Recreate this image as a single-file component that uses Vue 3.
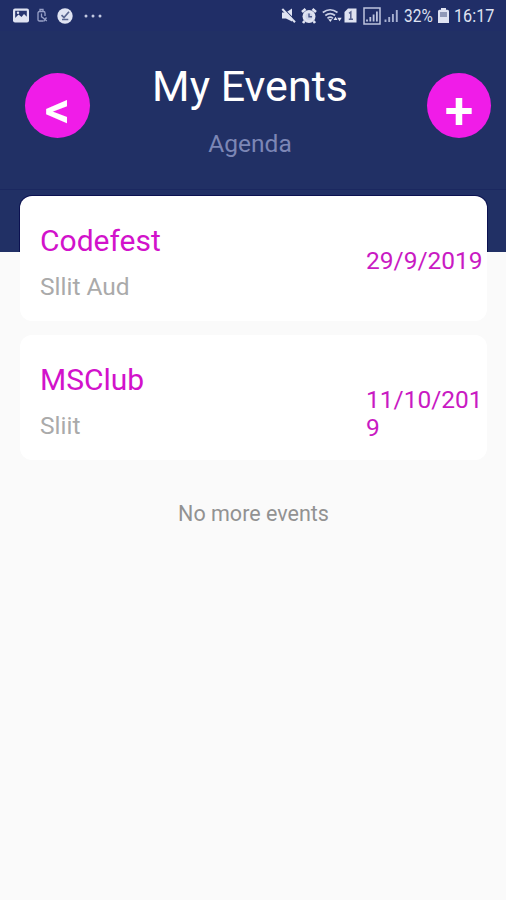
<script setup>
import { ref } from 'vue'

const events = ref([
  { id: 1, name: 'Codefest', venue: 'Sllit Aud', date: '29/9/2019' },
  { id: 2, name: 'MSClub', venue: 'Sliit', date: '11/10/2019' }
])

const battery = ref('32%')
const time = ref('16:17')
</script>

<template>
  <div class="screen">
    <header class="header">
      <div class="status-bar">
        <div class="status-left">
          <svg width="16" height="15" viewBox="0 0 16 15">
            <rect x="0" y="0.5" width="16" height="14" rx="2" fill="#dfe3f2" />
            <path d="M2.2 2.7h11.6v6L11 6 8.5 9 5.5 6.5 2.2 10z" fill="#26346f" />
            <circle cx="5" cy="4.8" r="1.2" fill="#dfe3f2" />
          </svg>
          <svg class="icon-data" width="11" height="15" viewBox="0 0 11 15" fill="none" stroke="#98a1c8" stroke-width="1.3">
            <path d="M6 13H2.5Q1 13 1 11.500V5Q1 3.500 2.500 3.500h4Q8 3.500 8 5v3" />
            <path d="M3 3.500V1.500h3v2M4.500 5.500v4" />
            <path d="M5 9l4.800 4M9.500 9.500 6.500 13.500" />
          </svg>
          <svg class="icon-check" width="16" height="16" viewBox="0 0 16 16">
            <circle cx="8" cy="8" r="7.700" fill="#dfe3f2" />
            <path d="M4.500 7.200 7 9.500l5-5.700M5 11.500h6.300" fill="none" stroke="#59658f" stroke-width="1.700" />
          </svg>
          <svg class="icon-more" width="18" height="4" viewBox="0 0 18 4" fill="#c3c9e1">
            <circle cx="2" cy="2" r="1.500" />
            <circle cx="9" cy="2" r="1.500" />
            <circle cx="16" cy="2" r="1.500" />
          </svg>
        </div>
        <div class="status-right">
          <svg width="15" height="16" viewBox="0 0 15 16">
            <path d="M1 4.500h4L11 .5v13L5 10.500H1z" fill="#dfe3f2" />
            <path d="M2.500 .8 14.500 12.800" stroke="#213067" stroke-width="1.300" />
            <path d="M1.300 1 14 14.300" stroke="#dfe3f2" stroke-width="2" />
          </svg>
          <svg class="icon-alarm" width="16" height="16" viewBox="0 0 16 16">
            <circle cx="8" cy="8.500" r="6.500" fill="#dfe3f2" />
            <path d="M1 4l3.500-3M15 4l-3.500-3M3.500 13 2 15M12.500 13l1.500 2" stroke="#dfe3f2" stroke-width="2.600" />
            <circle cx="8" cy="8.500" r="3.600" fill="#cdd3e7" />
            <path d="M8 5.500v3.300h3" fill="none" stroke="#4a588c" stroke-width="1.400" />
          </svg>
          <svg class="icon-wifi" width="20" height="16" viewBox="0 0 20 16">
            <path d="M.8 4.500Q8 -1 15.500 4.500M3.300 7.500Q8.200 3.600 13 7.500M5.500 10.300Q8.200 8 11 10.300" fill="none" stroke="#c9cfe5" stroke-width="1.700" />
            <path d="M6.300 11.300h4L8.300 14zM11.500 12l2-3.300 2 3.300zM15.300 9.800h4.400l-2.200 3.500z" fill="#dfe3f2" />
          </svg>
          <svg class="icon-sim" width="13" height="15" viewBox="0 0 13 15">
            <path d="M4 .5h8.500v14H.5V4z" fill="#dfe3f2" />
            <path d="M5 5.300 6.800 4v7M4.800 11.300H9" fill="none" stroke="#56628f" stroke-width="1.500" />
          </svg>
          <svg class="icon-roam" width="18" height="18" viewBox="0 0 18 18">
            <rect x="1" y="1" width="16" height="16" fill="none" stroke="#bdc4de" stroke-width="1.500" />
            <path d="M4 14.500v-2M7.300 14.500V10M10.600 14.500V7.500M13.900 14.500V4.500" stroke="#bdc4de" stroke-width="1.800" />
          </svg>
          <svg class="icon-signal" width="15" height="14" viewBox="0 0 15 14">
            <path d="M1.500 13v-2.500M5.200 13V8M8.900 13V5M12.800 13V1" stroke="#a7b0d1" stroke-width="1.900" />
          </svg>
          <span class="battery-text">{{ battery }}</span>
          <svg class="icon-battery" width="11" height="15" viewBox="0 0 11 15">
            <path d="M3 0h5v1.800h1.500Q11 1.800 11 3.300V15H0V3.300Q0 1.800 1.500 1.800H3z" fill="#dfe3f2" />
            <rect x="2" y="4" width="7" height="5" fill="#9099b8" />
          </svg>
          <span class="time">{{ time }}</span>
        </div>
      </div>

      <div class="title-row">
        <button class="round-btn back">&lt;</button>
        <div class="titles">
          <h1>My Events</h1>
          <p>Agenda</p>
        </div>
        <button class="round-btn add">+</button>
      </div>
      <div class="header-line"></div>
      <div class="card-edge"></div>
    </header>

    <main class="list">
      <div v-for="event in events" :key="event.id" class="card">
        <div class="info">
          <div class="name">{{ event.name }}</div>
          <div class="venue">{{ event.venue }}</div>
        </div>
        <div class="date">{{ event.date }}</div>
      </div>
      <p class="empty">No more events</p>
    </main>
  </div>
</template>

<style>
body {
  margin: 0;
  background-color: #fafafa;
}
</style>

<style scoped>
.screen {
  width: 506px;
  height: 900px;
  overflow: hidden;
  background-color: #fafafa;
  font-family: Roboto, "Liberation Sans", sans-serif;
}

.header {
  height: 252px;
  background-color: #213065;
  overflow: hidden;
}

.status-bar {
  box-sizing: border-box;
  height: 31px;
  padding: 0 12px 0 13px;
  display: flex;
  justify-content: space-between;
  align-items: center;
  background-color: #202e67;
  color: #dfe3f2;
}

.status-bar svg {
  display: block;
  flex: none;
}

.status-left,
.status-right {
  display: flex;
  align-items: center;
}

.icon-data {
  margin-left: 8px;
}

.icon-check {
  margin-left: 9px;
}

.icon-more {
  margin-left: 11px;
}

.icon-alarm,
.icon-wifi {
  margin-left: 5px;
}

.icon-sim {
  margin-left: 2px;
}

.icon-roam {
  margin-left: 6px;
}

.icon-signal {
  margin-left: 3px;
}

.battery-text,
.time {
  font-size: 18px;
  line-height: 31px;
  transform-origin: left center;
}

.battery-text {
  width: 30px;
  margin-left: 5px;
  transform: scaleX(0.86);
}

.icon-battery {
  margin-left: 4px;
}

.time {
  width: 40px;
  margin-left: 5px;
  transform: scaleX(0.9);
}

.title-row {
  height: 158px;
  padding: 0 15px 0 25px;
  box-sizing: border-box;
  display: flex;
}

.round-btn {
  flex: none;
  width: 65px;
  height: 65px;
  margin-top: 42px;
  padding: 0;
  border: none;
  border-radius: 50%;
  background-color: #f01ce8;
  color: #fff;
  font-family: inherit;
  font-weight: 600;
  text-align: center;
}

.back {
  font-size: 50px;
  line-height: 74px;
}

.add {
  width: 64px;
  font-size: 52px;
  line-height: 76px;
}

.titles {
  flex: 1;
  padding: 30px 17px 0 0;
  text-align: center;
}

h1 {
  margin: 0;
  font-size: 43px;
  font-weight: 400;
  line-height: 50px;
  color: #fff;
}

p {
  margin: 0;
}

.titles p {
  margin-top: 18px;
  font-size: 24.5px;
  line-height: 30px;
  color: #7c86b5;
}

.header-line {
  height: 1px;
  background-color: #1b2860;
}

/* thin dark edge where the first card sits on the header */
.card-edge {
  height: 57px;
  margin: 5px 18px 0 19px;
  border-radius: 13px 13px 0 0;
  background-color: #0b1150;
}

.list {
  margin-top: -56px;
  padding: 0 19px 0 20px;
  display: flex;
  flex-direction: column;
  gap: 14px;
}

.card {
  height: 125px;
  box-sizing: border-box;
  padding: 25px 4px 0 20px;
  display: flex;
  justify-content: space-between;
  border-radius: 12px;
  background-color: #fff;
}

.name {
  font-size: 30px;
  line-height: 40px;
  color: #d212cb;
}

.venue {
  margin-top: 12px;
  font-size: 24.5px;
  line-height: 28px;
  color: #aaa;
}

.date {
  width: 117px;
  margin-top: 26px;
  font-size: 24.5px;
  line-height: 28px;
  word-break: break-all;
  color: #c91ac3;
}

.empty {
  margin-top: 26px;
  font-size: 21.5px;
  line-height: 28px;
  text-align: center;
  color: #929292;
}
</style>
